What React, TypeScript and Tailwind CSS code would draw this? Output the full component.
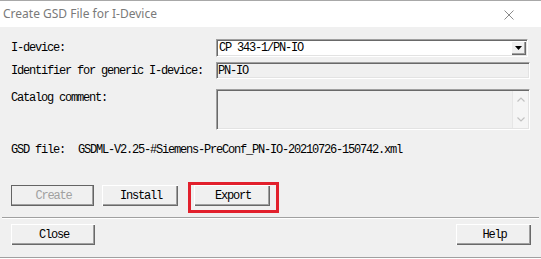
import React from "react";

const mono = "font-['Liberation_Mono',monospace] text-[12px] leading-[12px] tracking-[-1.2px] text-black";

const raised =
  "shadow-[inset_1px_1px_0_#ffffff,inset_-1px_-1px_0_#696969,inset_-2px_-2px_0_#a0a0a0] bg-[#f0f0f0]";

const sunken =
  "border-t border-l border-t-[#a0a0a0] border-l-[#a0a0a0] border-b border-r border-b-white border-r-white shadow-[inset_1px_1px_0_#696969,inset_-1px_-1px_0_#e3e3e3]";

function Button({
  label,
  width,
  disabled,
  className = "",
}: {
  label: string;
  width: string;
  disabled?: boolean;
  className?: string;
}) {
  return (
    <div
      className={`${width} h-[21px] flex items-center justify-center ${raised} ${
        disabled ? "outline outline-1 outline-[#646464] -outline-offset-1" : ""
      } ${className}`}
    >
      <span className={`${mono} ${disabled ? "!text-[#a0a0a0]" : ""} pl-[2px]`}>{label}</span>
    </div>
  );
}

export default function App() {
  return (
    <div className="w-[541px] h-[259px] bg-[#f0f0f0] flex flex-col overflow-hidden border-t border-[#a8a8a8]">
      {/* Title bar */}
      <div className="h-[26px] bg-white flex items-center justify-between pl-[3px] pr-[27px] shrink-0">
        <span className="font-['Noto_Sans',sans-serif] text-[12px] text-[#7a7a7a] leading-none">
          Create GSD File for I-Device
        </span>
        <svg width="10" height="10" viewBox="0 0 10 10" className="mt-[1px]">
          <path d="M0.5 0.5 L9.5 9.5 M9.5 0.5 L0.5 9.5" stroke="#8a8a8a" strokeWidth="1" fill="none" />
        </svg>
      </div>

      {/* Form */}
      <div className="pl-[11px] flex flex-col">
        <div className="mt-[12px] flex items-center h-[18px]">
          <span className={`${mono} w-[205px]`}>I-device:</span>
          <div className={`w-[312px] h-[18px] bg-white flex items-center justify-between ${sunken}`}>
            <span className={`${mono} pl-[2px]`}>CP 343-1/PN-IO</span>
            <div className={`w-[15px] h-[14px] mr-[1px] flex items-center justify-center ${raised}`}>
              <svg width="7" height="4" viewBox="0 0 7 4">
                <path d="M0 0 H7 L3.5 4 Z" fill="#000" />
              </svg>
            </div>
          </div>
        </div>

        <div className="mt-[5px] flex items-center h-[17px]">
          <span className={`${mono} w-[205px]`}>Identifier for generic I-device:</span>
          <div className={`w-[314px] h-[17px] bg-[#f0f0f0] flex items-center ${sunken}`}>
            <span className={`${mono} pl-[1px]`}>PN-IO</span>
          </div>
        </div>

        <div className="mt-[10px] flex h-[41px]">
          <span className={`${mono} w-[205px] pt-[3px]`}>Catalog comment:</span>
          <div className={`w-[314px] h-[41px] bg-[#f0f0f0] flex justify-end ${sunken}`}>
            <div className="w-[16px] mr-[1px] my-[1px] bg-[#f5f5f5] border-l border-[#e6e6e6] flex flex-col items-center justify-between py-[6px]">
              <svg width="8" height="5" viewBox="0 0 8 5">
                <path d="M0.5 4.5 L4 1 L7.5 4.5" stroke="#c2c2c2" strokeWidth="1.2" fill="none" />
              </svg>
              <svg width="8" height="5" viewBox="0 0 8 5">
                <path d="M0.5 0.5 L4 4 L7.5 0.5" stroke="#c2c2c2" strokeWidth="1.2" fill="none" />
              </svg>
            </div>
          </div>
        </div>

        <div className="mt-[14px] flex items-center h-[12px]">
          <span className={`${mono} w-[67px]`}>GSD file:</span>
          <span className={mono}>GSDML-V2.25-#Siemens-PreConf_PN-IO-20210726-150742.xml</span>
        </div>

        <div className="mt-[29px] flex items-center">
          <Button label="Create" width="w-[83px]" disabled />
          <Button label="Install" width="w-[76px]" className="ml-[8px]" />
          <div className="relative ml-[16px]">
            <Button label="Export" width="w-[76px]" />
            <div className="absolute -left-[6px] -top-[3px] w-[91px] h-[31px] border-[3px] border-[#e2202c]" />
          </div>
        </div>
      </div>

      {/* Separator */}
      <div className="mt-[11px] mx-[2px] h-[2px] border-t border-[#a0a0a0] border-b border-b-white" />

      <div className="mt-[5px] pl-[11px] pr-[10px] flex items-center justify-between">
        <Button label="Close" width="w-[84px]" />
        <Button label="Help" width="w-[75px]" />
      </div>

      <div className="mt-[12px] h-[2px] border-t border-[#a0a0a0] border-b border-b-white" />
    </div>
  );
}
